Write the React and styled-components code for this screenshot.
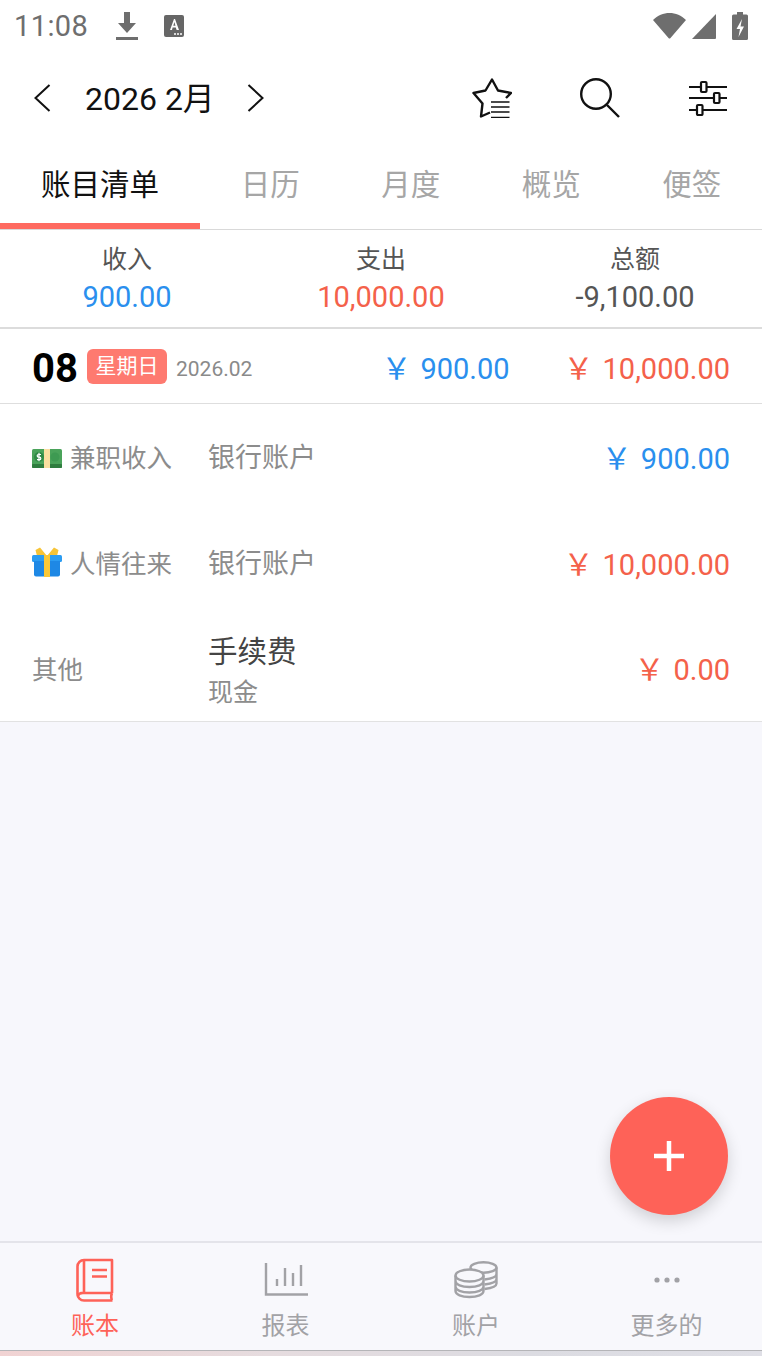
import React from "react";
import styled, { createGlobalStyle } from "styled-components";

const RED = "#f4614a";
const BLUE = "#2a8fee";
const CORAL = "#fe6258";
const PAGE_BG = "#f7f7fc";

const GlobalStyle = createGlobalStyle`
  html, body { margin: 0; padding: 0; }
  body {
    background: ${PAGE_BG};
    font-family: Roboto, "Noto Sans CJK SC", sans-serif;
  }
  * { box-sizing: border-box; }
`;

const Page = styled.div`
  position: relative;
  width: 762px;
  height: 1356px;
  display: flex;
  flex-direction: column;
  overflow: hidden;
  background: ${PAGE_BG};
`;

const Top = styled.div`
  background: #fff;
`;

const StatusBar = styled.div`
  height: 50px;
  display: flex;
  align-items: center;
  padding: 2px 14px 0 14px;
  color: #6e6e6e;
`;

const Clock = styled.div`
  font-size: 29px;
  line-height: 50px;
  width: 102px;
  letter-spacing: 0.4px;
`;

const StatusLeft = styled.div`
  display: flex;
  align-items: center;
  gap: 26px;
  flex: 1;
`;

const StatusRight = styled.div`
  display: flex;
  align-items: center;
  gap: 6px;
`;

const Toolbar = styled.div`
  height: 96px;
  display: flex;
  align-items: center;
  padding-left: 33px;
`;

const MonthText = styled.div`
  font-size: 32px;
  color: #111;
  width: 128px;
  margin: 0 34px 4px 34px;
  white-space: nowrap;
`;

const ToolIcons = styled.div`
  margin-left: auto;
  display: flex;
  align-items: center;
  gap: 68px;
  padding-right: 34px;
`;

const Tabs = styled.div`
  height: 84px;
  display: flex;
  border-bottom: 1px solid #d9d9d9;
`;

const Tab = styled.div`
  position: relative;
  flex: 0 0 ${(p) => (p.$active ? 200 : 140.5)}px;
  text-align: center;
  font-size: 29.5px;
  line-height: 76px;
  padding-top: 1px;
  color: ${(p) => (p.$active ? "#111" : "#a6a6a6")};
  ${(p) =>
    p.$active &&
    `&::after {
      content: "";
      position: absolute;
      left: 0;
      right: 0;
      bottom: 0;
      height: 6px;
      background: #fe6a60;
    }`}
`;

const Summary = styled.div`
  height: 99px;
  display: grid;
  grid-template-columns: 254px 254px 254px;
  border-bottom: 2px solid #dcdcdc;
  text-align: center;
`;

const SummaryCol = styled.div`
  padding-top: 14px;
`;

const SummaryLabel = styled.div`
  font-size: 25px;
  line-height: 32px;
  color: #555;
`;

const SummaryValue = styled.div`
  font-size: 29px;
  line-height: 40px;
  margin-top: 1px;
  color: ${(p) => p.$color};
`;

const DayHeader = styled.div`
  height: 75px;
  display: flex;
  align-items: center;
  padding: 2px 32px 0 32px;
  background: #fff;
  border-bottom: 1px solid #dedede;
`;

const DayNumber = styled.div`
  font-size: 40px;
  font-weight: 700;
  color: #000;
  width: 55px;
  margin-top: 2px;
`;

const WeekBadge = styled.div`
  width: 80px;
  height: 35px;
  border-radius: 6px;
  background: #fe7a70;
  color: #fff;
  font-size: 21px;
  line-height: 35px;
  text-align: center;
  margin-top: -1px;
`;

const DayMonth = styled.div`
  font-size: 21px;
  color: #8a8a8a;
  margin-left: 9px;
  flex: 1;
  margin-top: 4px;
`;

const Amount = styled.div`
  display: flex;
  align-items: baseline;
  height: 40px;
  font-size: 29px;
  line-height: 40px;
  color: ${(p) => p.$color};
  white-space: nowrap;
  margin-left: ${(p) => p.$gap || 0}px;
  margin-bottom: 3px;
`;

const Yen = styled.span`
  width: 33px;
  margin-left: -6px;
  margin-right: 6px;
  font-family: "Noto Sans CJK SC", sans-serif;
  font-size: 30px;
  line-height: 40px;
`;

const List = styled.div`
  background: #fff;
  border-bottom: 1px solid #e2e2e2;
`;

const Row = styled.div`
  height: ${(p) => (p.$tall ? 105 : 106)}px;
  display: flex;
  align-items: center;
  padding: 0 32px;
`;

const Category = styled.div`
  width: 176px;
  display: flex;
  align-items: center;
  gap: 8px;
  font-size: 25.5px;
  color: #8c8c8c;
  white-space: nowrap;
  margin-top: -3px;
`;

const Account = styled.div`
  flex: 1;
  font-size: 27px;
  color: #8c8c8c;
  margin-top: -3px;
`;

const NoteBlock = styled.div`
  flex: 1;
  margin-top: 6px;
`;

const NoteTitle = styled.div`
  font-size: 29.5px;
  line-height: 38px;
  color: #444;
`;

const NoteSub = styled.div`
  font-size: 25px;
  line-height: 34px;
  margin-top: 5px;
  color: #8c8c8c;
`;

const Fab = styled.div`
  position: absolute;
  left: 610px;
  top: 1097px;
  width: 118px;
  height: 118px;
  border-radius: 50%;
  background: ${CORAL};
  box-shadow: 0 6px 16px rgba(0, 0, 0, 0.16);
  display: flex;
  align-items: center;
  justify-content: center;
`;

const Spacer = styled.div`
  flex: 1;
`;

const BottomNav = styled.div`
  height: 110px;
  display: grid;
  grid-template-columns: 190px 191px 190px 191px;
  background: #f8f8fc;
  border-top: 2px solid #e4e4ea;
  border-bottom: 1px solid #b5b5b8;
`;

const NavItem = styled.div`
  display: flex;
  flex-direction: column;
  align-items: center;
  padding-top: 14px;
  color: ${(p) => (p.$active ? CORAL : "#a2a2a6")};
`;

const NavIconBox = styled.div`
  height: 46px;
  display: flex;
  align-items: center;
  justify-content: center;
`;

const NavLabel = styled.div`
  font-size: 24px;
  line-height: 34px;
  margin-top: 6px;
`;

const BottomStrip = styled.div`
  height: 5px;
  background: linear-gradient(90deg, #f1d3d3 0%, #e6dcdf 35%, #dcdce2 70%, #dfdfe6 100%);
`;

const Chevron = ({ dir }) => (
  <svg width="18" height="28" viewBox="0 0 18 28" fill="none" stroke="#111" strokeWidth="2">
    <path d={dir === "left" ? "M16.500 1 2.500 14l14 13" : "M1.500 1l14 13-14 13"} />
  </svg>
);

const DownloadIcon = () => (
  <svg width="22" height="28" viewBox="0 0 22 28" fill="#6e6e6e">
    <path d="M8 0h6v11h6L11 21 2 11h6z" />
    <rect y="25" width="22" height="3" />
  </svg>
);

const AppIcon = () => (
  <svg width="20" height="22" viewBox="0 0 20 22">
    <rect width="20" height="22" rx="2" fill="#666" />
    <path d="M6 15 10 4h1l4 11h-2.400l-.8-2.400H8.600L8 15zm3.300-4.300h2.200L10.400 7z" fill="#fff" />
    <circle cx="11" cy="19" r="1" fill="#fff" />
    <circle cx="14" cy="19" r="1" fill="#fff" />
    <circle cx="17" cy="19" r="1" fill="#fff" />
  </svg>
);

const WifiIcon = () => (
  <svg width="33" height="26" viewBox="0 0 33 26" fill="#6e6e6e">
    <path d="M0 7C4.500 2.500 10.500 0 16.500 0S28.500 2.500 33 7L17.500 25a1.300 1.300 0 0 1-2 0z" />
  </svg>
);

const SignalIcon = () => (
  <svg width="24" height="25" viewBox="0 0 24 25" fill="#6e6e6e">
    <path d="M24 0v24a1 1 0 0 1-1 1H0z" />
  </svg>
);

const BatteryIcon = () => (
  <svg width="16" height="28" viewBox="0 0 16 28" style={{ marginLeft: 10 }}>
    <path d="M5 0h6v2.500h3.500a1.500 1.500 0 0 1 1.500 1.500v22.500a1.500 1.500 0 0 1-1.500 1.500h-13A1.500 1.500 0 0 1 0 26.500V4a1.500 1.500 0 0 1 1.500-1.500H5z" fill="#6e6e6e" />
    <path d="M10 7 4.500 17H8l-1.500 8L12 14.500H8.500z" fill="#fff" />
  </svg>
);

const StarListIcon = () => (
  <svg width="41" height="40" viewBox="0 0 41 40" fill="none" stroke="#111" strokeWidth="2.400" strokeLinejoin="round">
    <path d="M19 34.500 10 38.500 11.500 25.500 2.500 15 14.500 12.500 21 1.500 27 12.500 40 15 35 20" />
    <path strokeWidth="1.400" d="M20 24h18.500M20 29h18.500M20 34h18.500M20 39.500h18.500" />
  </svg>
);

const SearchIcon = () => (
  <svg width="40" height="40" viewBox="0 0 40 40" fill="none" stroke="#111" strokeWidth="2.400">
    <circle cx="16" cy="16" r="14.800" />
    <path d="m27 27 12 12" />
  </svg>
);

const SlidersIcon = () => (
  <svg width="40" height="36" viewBox="0 0 40 36" fill="none" stroke="#111" strokeWidth="2.200">
    <path d="M1 7h12M19 7h20M1 18h25M32 18h7M1 30h8M15 30h24" />
    <rect x="13" y="2" width="5.500" height="10" rx="1" />
    <rect x="26" y="13" width="5.500" height="10" rx="1" />
    <rect x="9" y="25" width="5.500" height="10" rx="1" />
  </svg>
);

const MoneyEmoji = () => (
  <svg width="30" height="19" viewBox="0 0 30 19" style={{ marginTop: 5 }}>
    <rect width="30" height="19" rx="1.500" fill="#4aa35a" />
    <rect y="15" width="30" height="4" rx="1" fill="#2f7d3f" />
    <rect x="12" width="6" height="19" fill="#f9dfa0" />
    <circle cx="7" cy="8" r="5" fill="#2f8a45" />
    <circle cx="23" cy="8" r="4.500" fill="#3e9a52" />
    <path d="M9 5.500H6.500a1.300 1.300 0 0 0 0 2.600h1a1.300 1.300 0 0 1 0 2.600H5M7 3.800v8.500" fill="none" stroke="#fff" strokeWidth="1.200" />
  </svg>
);

const GiftEmoji = () => (
  <svg width="30" height="30" viewBox="0 0 30 30">
    <path d="M15 9 8 .5 3.500 3 5 9zM15 9 22 .5 26.500 3 25 9z" fill="#f7c437" />
    <rect y="8" width="30" height="7" rx="1.500" fill="#2b9cf2" />
    <path d="M2 14h26v13.500a2 2 0 0 1-2 2H4a2 2 0 0 1-2-2z" fill="#1e88e5" />
    <rect x="12" y="8" width="6" height="22" fill="#fbc837" />
  </svg>
);

const BookIcon = () => (
  <svg width="38" height="44" viewBox="0 0 38 44" fill="none" stroke={CORAL} strokeWidth="2.600" strokeLinejoin="round">
    <path d="M36 35V2H8a6.500 6.500 0 0 0-6.500 6.500V36A6.500 6.500 0 0 0 8 42.500h28.500" />
    <path d="M36 35H8a6.500 6.500 0 0 0-6.500 3M8 2v33M36 35c-1 2.500-1 5 0 7" />
    <path d="M16 12h15M16 18.500h15" />
  </svg>
);

const ChartIcon = () => (
  <svg width="44" height="34" viewBox="0 0 44 34" fill="none" stroke="#a2a2a6" strokeWidth="2.400">
    <path d="M2 0v31.500h42" />
    <path d="M13 16v7M21 5v18M29 10v13M37 2v21" />
  </svg>
);

const CoinsIcon = () => (
  <svg width="44" height="38" viewBox="0 0 44 38" fill="none" stroke="#a2a2a6" strokeWidth="2.400">
    <ellipse cx="29.500" cy="6.500" rx="13" ry="5.200" />
    <path d="M42.500 6.500v16c0 2.500-3.500 4.500-12 5.500M42.500 13c0 2.500-3.500 4.500-12 5.500M42.500 18c0 2.500-3.500 4.500-12 5.500" />
    <ellipse cx="15.500" cy="14.500" rx="14" ry="6" fill="#f8f8fc" />
    <path d="M1.500 14.500V30c0 3.500 6 6 14 6s14-2.500 14-6V14.500M1.500 20c0 3.500 6 6 14 6s14-2.500 14-6M1.500 25.500c0 3.500 6 6 14 6s14-2.500 14-6" />
  </svg>
);

const DotsIcon = () => (
  <svg width="26" height="6" viewBox="0 0 26 6" fill="#a2a2a6">
    <circle cx="3" cy="3" r="2.600" />
    <circle cx="13" cy="3" r="2.600" />
    <circle cx="23" cy="3" r="2.600" />
  </svg>
);

const PlusIcon = () => (
  <svg width="30" height="30" viewBox="0 0 30 30" stroke="#fff" strokeWidth="4.500">
    <path d="M15 0v30M0 15h30" />
  </svg>
);

const Money = ({ color, value, gap }) => (
  <Amount $color={color} $gap={gap}>
    <Yen>￥</Yen>
    {value}
  </Amount>
);

const tabs = ["账目清单", "日历", "月度", "概览", "便签"];

export default function App() {
  return (
    <Page>
      <GlobalStyle />
      <Top>
        <StatusBar>
          <Clock>11:08</Clock>
          <StatusLeft>
            <DownloadIcon />
            <AppIcon />
          </StatusLeft>
          <StatusRight>
            <WifiIcon />
            <SignalIcon />
            <BatteryIcon />
          </StatusRight>
        </StatusBar>
        <Toolbar>
          <Chevron dir="left" />
          <MonthText>2026 2月</MonthText>
          <Chevron dir="right" />
          <ToolIcons>
            <StarListIcon />
            <SearchIcon />
            <SlidersIcon />
          </ToolIcons>
        </Toolbar>
        <Tabs>
          {tabs.map((t, i) => (
            <Tab key={t} $active={i === 0}>
              {t}
            </Tab>
          ))}
        </Tabs>
        <Summary>
          <SummaryCol>
            <SummaryLabel>收入</SummaryLabel>
            <SummaryValue $color={BLUE}>900.00</SummaryValue>
          </SummaryCol>
          <SummaryCol>
            <SummaryLabel>支出</SummaryLabel>
            <SummaryValue $color={RED}>10,000.00</SummaryValue>
          </SummaryCol>
          <SummaryCol>
            <SummaryLabel>总额</SummaryLabel>
            <SummaryValue $color="#555">-9,100.00</SummaryValue>
          </SummaryCol>
        </Summary>
      </Top>
      <DayHeader>
        <DayNumber>08</DayNumber>
        <WeekBadge>星期日</WeekBadge>
        <DayMonth>2026.02</DayMonth>
        <Money color={BLUE} value="900.00" />
        <Money color={RED} value="10,000.00" gap={60} />
      </DayHeader>
      <List>
        <Row>
          <Category>
            <MoneyEmoji />
            兼职收入
          </Category>
          <Account>银行账户</Account>
          <Money color={BLUE} value="900.00" />
        </Row>
        <Row>
          <Category>
            <GiftEmoji />
            人情往来
          </Category>
          <Account>银行账户</Account>
          <Money color={RED} value="10,000.00" />
        </Row>
        <Row $tall>
          <Category>其他</Category>
          <NoteBlock>
            <NoteTitle>手续费</NoteTitle>
            <NoteSub>现金</NoteSub>
          </NoteBlock>
          <Money color={RED} value="0.00" />
        </Row>
      </List>
      <Spacer />
      <BottomNav>
        <NavItem $active>
          <NavIconBox>
            <BookIcon />
          </NavIconBox>
          <NavLabel>账本</NavLabel>
        </NavItem>
        <NavItem>
          <NavIconBox>
            <ChartIcon />
          </NavIconBox>
          <NavLabel>报表</NavLabel>
        </NavItem>
        <NavItem>
          <NavIconBox>
            <CoinsIcon />
          </NavIconBox>
          <NavLabel>账户</NavLabel>
        </NavItem>
        <NavItem>
          <NavIconBox>
            <DotsIcon />
          </NavIconBox>
          <NavLabel>更多的</NavLabel>
        </NavItem>
      </BottomNav>
      <BottomStrip />
      <Fab>
        <PlusIcon />
      </Fab>
    </Page>
  );
}
